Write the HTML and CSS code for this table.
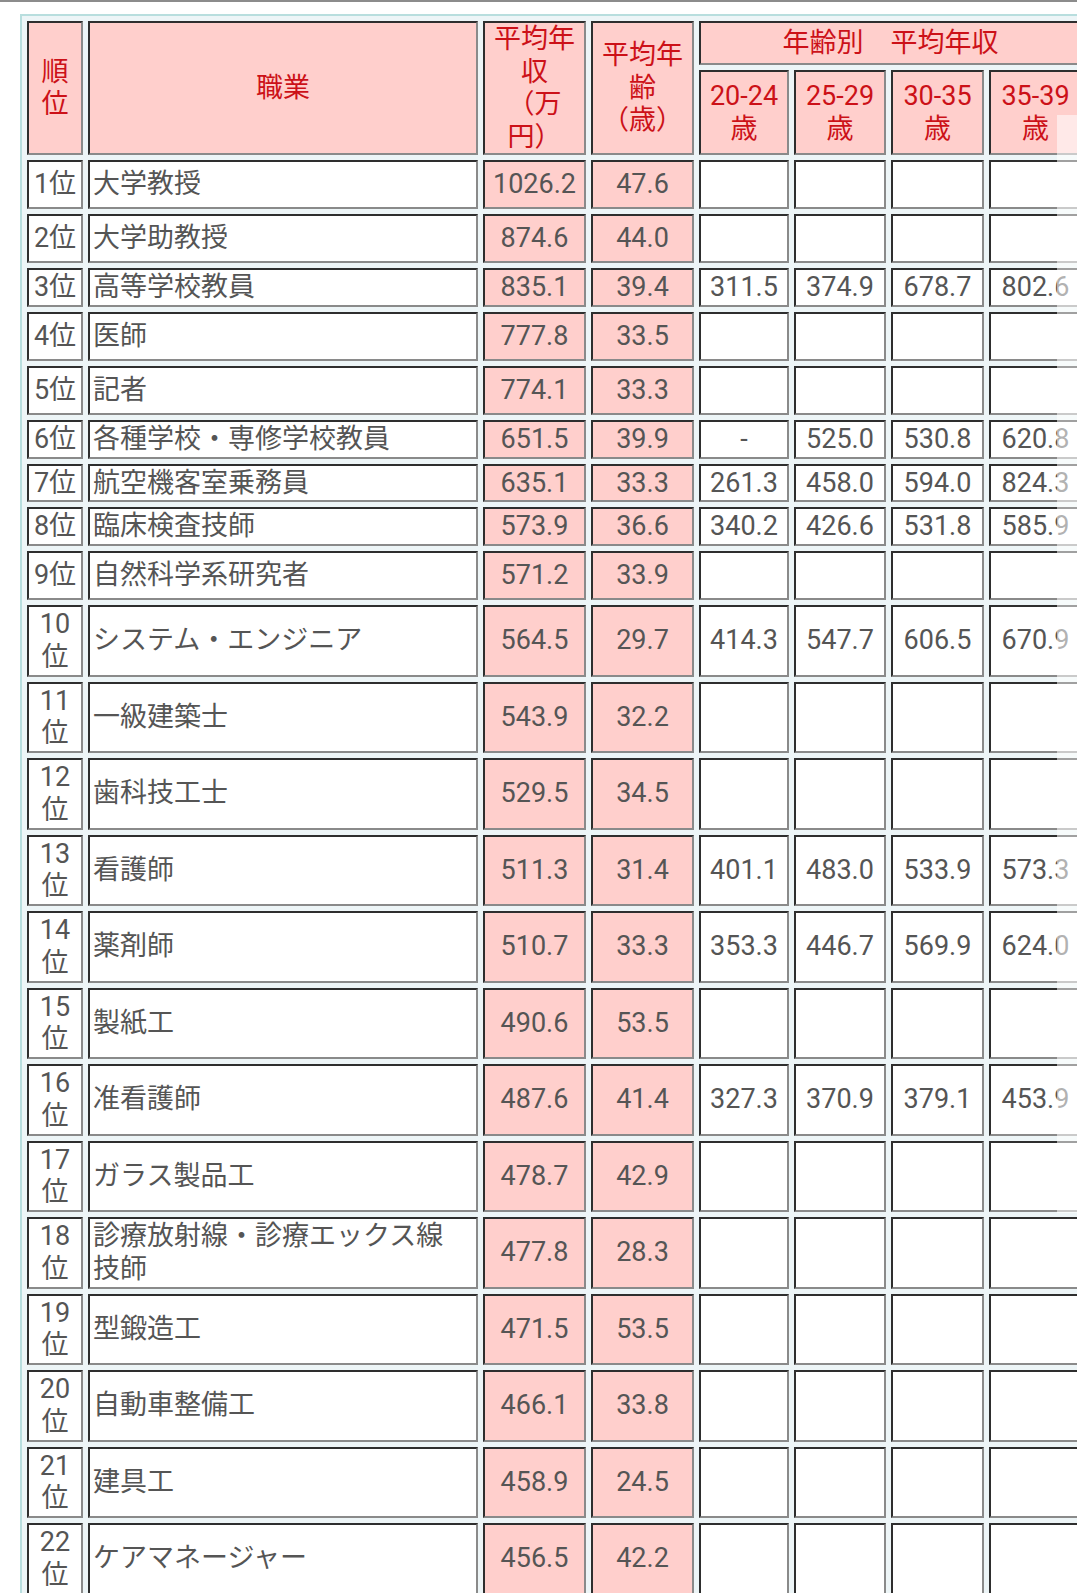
FILE: index.html
```html
<!DOCTYPE html>
<html lang="ja">
<head>
<meta charset="utf-8">
<title>職業別 平均年収ランキング</title>
<link rel="stylesheet" href="styles.css">
</head>
<body>
<div class="topbar"></div>
<div class="wrap">
<table class="rank">
<colgroup>
<col class="c-rank"><col class="c-job"><col class="c-inc"><col class="c-age"><col class="c-a1"><col class="c-a2"><col class="c-a3"><col class="c-a4">
</colgroup>
<thead>
<tr class="h1">
<th rowspan="2">順位</th>
<th rowspan="2">職業</th>
<th rowspan="2">平均年収<br>（万円）</th>
<th rowspan="2">平均年齢<br>（歳）</th>
<th colspan="4" class="group">年齢別　平均年収</th>
</tr>
<tr class="h2">
<th>20-24歳</th>
<th>25-29歳</th>
<th>30-35歳</th>
<th>35-39歳</th>
</tr>
</thead>
<tbody>
<tr class="e"><td class="r">1位</td><td class="j">大学教授</td><td class="p">1026.2</td><td class="p">47.6</td><td></td><td></td><td></td><td></td></tr>
<tr class="e"><td class="r">2位</td><td class="j">大学助教授</td><td class="p">874.6</td><td class="p">44.0</td><td></td><td></td><td></td><td></td></tr>
<tr><td class="r">3位</td><td class="j">高等学校教員</td><td class="p">835.1</td><td class="p">39.4</td><td>311.5</td><td>374.9</td><td>678.7</td><td>802.6</td></tr>
<tr class="e"><td class="r">4位</td><td class="j">医師</td><td class="p">777.8</td><td class="p">33.5</td><td></td><td></td><td></td><td></td></tr>
<tr class="e"><td class="r">5位</td><td class="j">記者</td><td class="p">774.1</td><td class="p">33.3</td><td></td><td></td><td></td><td></td></tr>
<tr><td class="r">6位</td><td class="j">各種学校・専修学校教員</td><td class="p">651.5</td><td class="p">39.9</td><td>-</td><td>525.0</td><td>530.8</td><td>620.8</td></tr>
<tr><td class="r">7位</td><td class="j">航空機客室乗務員</td><td class="p">635.1</td><td class="p">33.3</td><td>261.3</td><td>458.0</td><td>594.0</td><td>824.3</td></tr>
<tr><td class="r">8位</td><td class="j">臨床検査技師</td><td class="p">573.9</td><td class="p">36.6</td><td>340.2</td><td>426.6</td><td>531.8</td><td>585.9</td></tr>
<tr class="e"><td class="r">9位</td><td class="j">自然科学系研究者</td><td class="p">571.2</td><td class="p">33.9</td><td></td><td></td><td></td><td></td></tr>
<tr><td class="r">10位</td><td class="j">システム・エンジニア</td><td class="p">564.5</td><td class="p">29.7</td><td>414.3</td><td>547.7</td><td>606.5</td><td>670.9</td></tr>
<tr><td class="r">11位</td><td class="j">一級建築士</td><td class="p">543.9</td><td class="p">32.2</td><td></td><td></td><td></td><td></td></tr>
<tr><td class="r">12位</td><td class="j">歯科技工士</td><td class="p">529.5</td><td class="p">34.5</td><td></td><td></td><td></td><td></td></tr>
<tr><td class="r">13位</td><td class="j">看護師</td><td class="p">511.3</td><td class="p">31.4</td><td>401.1</td><td>483.0</td><td>533.9</td><td>573.3</td></tr>
<tr><td class="r">14位</td><td class="j">薬剤師</td><td class="p">510.7</td><td class="p">33.3</td><td>353.3</td><td>446.7</td><td>569.9</td><td>624.0</td></tr>
<tr><td class="r">15位</td><td class="j">製紙工</td><td class="p">490.6</td><td class="p">53.5</td><td></td><td></td><td></td><td></td></tr>
<tr><td class="r">16位</td><td class="j">准看護師</td><td class="p">487.6</td><td class="p">41.4</td><td>327.3</td><td>370.9</td><td>379.1</td><td>453.9</td></tr>
<tr><td class="r">17位</td><td class="j">ガラス製品工</td><td class="p">478.7</td><td class="p">42.9</td><td></td><td></td><td></td><td></td></tr>
<tr><td class="r">18位</td><td class="j">診療放射線・診療エックス線<span class="nw">技師</span></td><td class="p">477.8</td><td class="p">28.3</td><td></td><td></td><td></td><td></td></tr>
<tr><td class="r">19位</td><td class="j">型鍛造工</td><td class="p">471.5</td><td class="p">53.5</td><td></td><td></td><td></td><td></td></tr>
<tr><td class="r">20位</td><td class="j">自動車整備工</td><td class="p">466.1</td><td class="p">33.8</td><td></td><td></td><td></td><td></td></tr>
<tr><td class="r">21位</td><td class="j">建具工</td><td class="p">458.9</td><td class="p">24.5</td><td></td><td></td><td></td><td></td></tr>
<tr><td class="r">22位</td><td class="j">ケアマネージャー</td><td class="p">456.5</td><td class="p">42.2</td><td></td><td></td><td></td><td></td></tr>
</tbody>
</table>
</div>
<div class="scrollfade"></div>
</body>
</html>
```
FILE: styles.css
```css
html, body {
  margin: 0;
  padding: 0;
  background: #ffffff;
  overflow: hidden;
}
body {
  position: relative;
  width: 1077px;
  font-family: Roboto, "Noto Sans CJK JP", sans-serif;
  font-size: 27px;
  color: #555555;
  text-spacing-trim: space-all;
}
.topbar {
  height: 2px;
  background: #8c8c8c;
}
.wrap {
  padding: 12px 0 0 20px;
}
.rank {
  table-layout: fixed;
  width: 1069px;
  border: 2px solid #b8dede;
  border-spacing: 5px;
  background: #edf5f7;
}
.c-rank { width: 56px; }
.c-job { width: 390px; }
.c-inc { width: 103px; }
.c-age { width: 103px; }
.c-a1 { width: 90px; }
.c-a2 { width: 92px; }
.c-a3 { width: 93px; }
.c-a4 { width: 93px; }
.rank th,
.rank td {
  box-sizing: border-box;
  border-style: solid;
  border-width: 2px;
  border-color: #2e2e2e #8a8a8a #8a8a8a #2e2e2e;
  padding: 1px 2px;
  line-height: 32.75px;
  text-align: center;
  vertical-align: middle;
  font-weight: normal;
  background: #ffffff;
  text-spacing-trim: space-all;
}
.rank th {
  padding: 0 2px;
  line-height: 32.5px;
  background: #ffcfcc;
  color: #cc1118;
}
.rank th.group {
  height: 44px;
}
.rank td.j {
  text-align: left;
  padding-left: 3px;
}
.rank td.p {
  background: #ffcfcc;
}
.rank tr.e td {
  height: 49px;
}
.nw {
  white-space: nowrap;
}
.scrollfade {
  position: absolute;
  left: 1057px;
  top: 115px;
  width: 20px;
  height: 1098px;
  background: rgba(255, 255, 255, 0.55);
}
```
